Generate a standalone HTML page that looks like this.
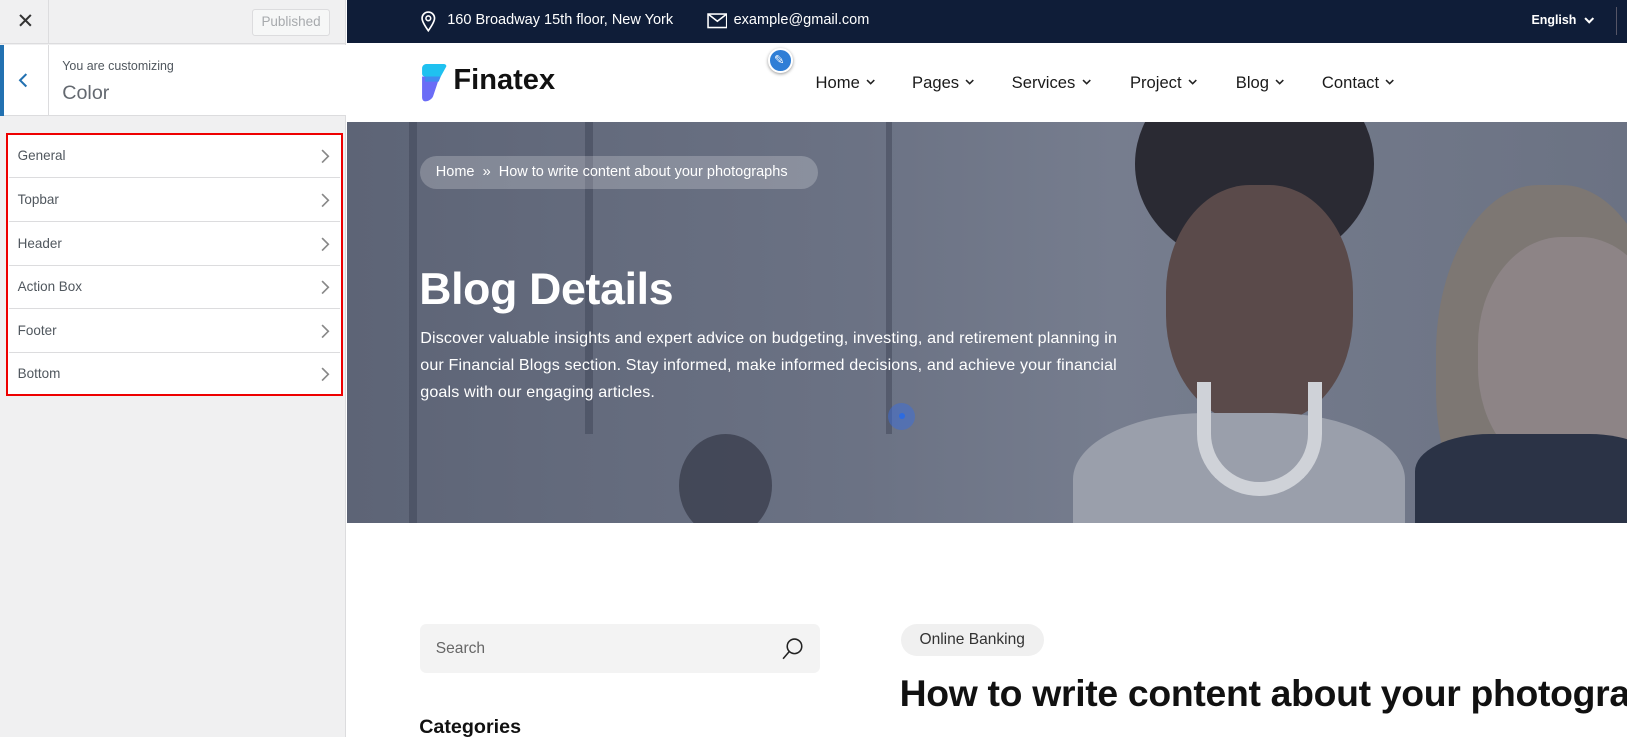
<!DOCTYPE html>
<html><head><meta charset="utf-8"><style>
html{zoom:1.0376}
*{box-sizing:border-box;margin:0;padding:0}
body{width:1568px;height:710px;overflow:hidden;font-family:"Liberation Sans",sans-serif;background:#fff;position:relative}
#wrap{position:absolute;left:0;top:0;width:1568px;height:710px;overflow:hidden}
.a{position:absolute}
#side{left:0;top:0;width:333px;height:710px;background:#f0f0f1;border-right:1px solid #dcdcde}
.item{position:absolute;left:9px;width:319px;height:42px;background:#fff;border-bottom:1px solid #dcdcde;font-size:13px;color:#50575e;padding:13px 0 0 8px}
.item svg{position:absolute;right:10px;top:13px}
.nav{font-size:16px;color:#1a1a1a;top:70px}
.nav svg{margin-left:6px;vertical-align:2px}
</style></head><body><div id="wrap">
<div id="side" class="a">
 <div class="a" style="left:0;top:0;width:333px;height:42px;border-bottom:1px solid #dcdcde"></div>
 <div class="a" style="left:46px;top:0;width:1px;height:42px;background:#dcdcde"></div>
 <div class="a" style="left:16px;top:9px;font-size:20px;color:#333">✕</div>
 <div class="a" style="left:243px;top:9px;width:75px;height:26px;border:1px solid #dcdcde;border-radius:3px;font-size:13px;color:#a7aaad;text-align:center;line-height:24px;background:#f6f7f7">Published</div>
 <div class="a" style="left:0;top:43px;width:333px;height:69px;background:#fff;border-bottom:1px solid #dcdcde"></div>
 <div class="a" style="left:0;top:43px;width:4px;height:69px;background:#2271b1"></div>
 <div class="a" style="left:46px;top:43px;width:1px;height:69px;background:#dcdcde"></div>
 <svg class="a" style="left:16px;top:69px" width="12" height="16"><path d="M9 2L3 8l6 6" stroke="#2271b1" stroke-width="2" fill="none"/></svg>
 <div class="a" style="left:60px;top:57px;font-size:12px;color:#50575e">You are customizing</div>
 <div class="a" style="left:60px;top:79px;font-size:19px;color:#646970;font-weight:300">Color</div>
 <div class="a" style="left:6px;top:128px;width:325px;height:254px;border:2px solid #e00;background:#fff"></div>
 <div class="item" style="top:130px">General<svg width="10" height="16"><path d="M2 2l6 6-6 6" stroke="#888" stroke-width="1.6" fill="none"/></svg></div>
 <div class="item" style="top:172px">Topbar<svg width="10" height="16"><path d="M2 2l6 6-6 6" stroke="#888" stroke-width="1.6" fill="none"/></svg></div>
 <div class="item" style="top:214px">Header<svg width="10" height="16"><path d="M2 2l6 6-6 6" stroke="#888" stroke-width="1.6" fill="none"/></svg></div>
 <div class="item" style="top:256px">Action Box<svg width="10" height="16"><path d="M2 2l6 6-6 6" stroke="#888" stroke-width="1.6" fill="none"/></svg></div>
 <div class="item" style="top:298px">Footer<svg width="10" height="16"><path d="M2 2l6 6-6 6" stroke="#888" stroke-width="1.6" fill="none"/></svg></div>
 <div class="item" style="top:340px;border:none;height:38px">Bottom<svg width="10" height="16"><path d="M2 2l6 6-6 6" stroke="#888" stroke-width="1.6" fill="none"/></svg></div>
</div>

<div class="a" style="left:334px;top:0;width:1234px;height:41px;background:#0f1d38"></div>
<svg class="a" style="left:405px;top:10px" width="16" height="22"><path d="M8 20C3 13 2 10 2 8a6 6 0 0 1 12 0c0 2-1 5-6 12z" stroke="#fff" stroke-width="1.6" fill="none"/><circle cx="8" cy="8" r="2.3" stroke="#fff" stroke-width="1.5" fill="none"/></svg>
<div class="a" style="left:431px;top:12px;color:#fff;font-size:14px">160 Broadway 15th floor, New York</div>
<svg class="a" style="left:681px;top:13px" width="20" height="15"><rect x="1" y="1" width="18" height="13" stroke="#fff" stroke-width="1.5" fill="none"/><path d="M1 1l9 7 9-7" stroke="#fff" stroke-width="1.5" fill="none"/></svg>
<div class="a" style="left:707px;top:12px;color:#fff;font-size:14px">example@gmail.com</div>
<div class="a" style="left:1476px;top:13px;color:#fff;font-size:12px;font-weight:bold">English</div>
<svg class="a" style="left:1526px;top:15px" width="12" height="9"><path d="M2 2l4 4 4-4" stroke="#fff" stroke-width="2" fill="none"/></svg>
<div class="a" style="left:1557px;top:7px;width:1px;height:27px;background:#556"></div>

<svg class="a" style="left:405px;top:61px" width="26" height="38"><path d="M6 1h17c2 0 3 2 2 3l-5 9H5c-2 0-3-1-3-3V5c0-2 2-4 4-4z" fill="#1fc1f0"/><path d="M2 13h17l-6 18c-1 4-5 6-8 6-2 0-3-2-3-4z" fill="#6b6cf6"/><path d="M5 13h15l-2 5H5z" fill="#3f8bf0"/></svg>
<div class="a" style="left:437px;top:62px;font-size:28px;font-weight:bold;color:#111">Finatex</div>
<div class="a" style="left:740px;top:46px;width:24px;height:24px;border-radius:50%;background:#2f7ed6;border:2px solid #fff;box-shadow:0 1px 3px #999"></div>
<div class="a" style="left:746px;top:50px;color:#fff;font-size:12px">✎</div>
<div class="a nav" style="left:786px">Home<svg width="9" height="6"><path d="M1 1l3.5 3.5L8 1" stroke="#222" stroke-width="1.5" fill="none"/></svg></div>
<div class="a nav" style="left:879px">Pages<svg width="9" height="6"><path d="M1 1l3.5 3.5L8 1" stroke="#222" stroke-width="1.5" fill="none"/></svg></div>
<div class="a nav" style="left:975px">Services<svg width="9" height="6"><path d="M1 1l3.5 3.5L8 1" stroke="#222" stroke-width="1.5" fill="none"/></svg></div>
<div class="a nav" style="left:1089px">Project<svg width="9" height="6"><path d="M1 1l3.5 3.5L8 1" stroke="#222" stroke-width="1.5" fill="none"/></svg></div>
<div class="a nav" style="left:1191px">Blog<svg width="9" height="6"><path d="M1 1l3.5 3.5L8 1" stroke="#222" stroke-width="1.5" fill="none"/></svg></div>
<div class="a nav" style="left:1274px">Contact<svg width="9" height="6"><path d="M1 1l3.5 3.5L8 1" stroke="#222" stroke-width="1.5" fill="none"/></svg></div>

<div class="a" style="left:334px;top:118px;width:1234px;height:386px;overflow:hidden;background:linear-gradient(90deg,#5d6476 0%,#6b7284 40%,#767d8e 60%,#6b7283 100%)">
 <div class="a" style="left:60px;top:0;width:8px;height:386px;background:#3d4455;opacity:.5"></div>
 <div class="a" style="left:230px;top:0;width:8px;height:300px;background:#3d4455;opacity:.5"></div>
 <div class="a" style="left:520px;top:0;width:6px;height:300px;background:#3d4455;opacity:.5"></div>
 <div class="a" style="left:760px;top:-60px;width:230px;height:200px;border-radius:50%;background:#2a2a33"></div>
 <div class="a" style="left:790px;top:60px;width:180px;height:230px;border-radius:45%;background:#5a4a4a"></div>
 <div class="a" style="left:700px;top:280px;width:320px;height:160px;border-radius:40% 40% 0 0;background:#9a9fab"></div>
 <div class="a" style="left:820px;top:250px;width:120px;height:110px;border:14px solid #cfd2d8;border-top:none;border-radius:0 0 60px 60px"></div>
 <div class="a" style="left:1050px;top:60px;width:220px;height:360px;border-radius:45%;background:#7d7773"></div>
 <div class="a" style="left:1090px;top:110px;width:180px;height:230px;border-radius:45%;background:#8d8486"></div>
 <div class="a" style="left:1030px;top:300px;width:240px;height:120px;border-radius:30% 30% 0 0;background:#2b3346"></div>
 <div class="a" style="left:320px;top:300px;width:90px;height:100px;border-radius:50%;background:#3b3f4d;opacity:.8"></div>
</div>
<div class="a" style="left:405px;top:150px;width:383px;height:32px;border-radius:16px;background:rgba(255,255,255,.22)"></div>
<div class="a" style="left:420px;top:158px;color:#fff;font-size:14px">Home &nbsp;»&nbsp; How to write content about your photographs</div>
<div class="a" style="left:404px;top:255px;color:#fff;font-size:43px;font-weight:bold;letter-spacing:-.3px">Blog Details</div>
<div class="a" style="left:405px;top:313px;width:695px;color:#fff;font-size:15.5px;letter-spacing:.15px;line-height:26px">Discover valuable insights and expert advice on budgeting, investing, and retirement planning in our Financial Blogs section. Stay informed, make informed decisions, and achieve your financial goals with our engaging articles.</div>
<div class="a" style="left:856px;top:388px;width:26px;height:26px;border-radius:50%;background:rgba(60,110,220,.5)"></div>
<div class="a" style="left:866px;top:398px;width:6px;height:6px;border-radius:50%;background:#2d6be0"></div>

<div class="a" style="left:405px;top:601px;width:385px;height:48px;border-radius:6px;background:#f3f3f3"></div>
<div class="a" style="left:420px;top:617px;font-size:15px;color:#666">Search</div>
<svg class="a" style="left:753px;top:614px" width="22" height="24"><circle cx="13" cy="9" r="7" stroke="#222" stroke-width="1.5" fill="none"/><path d="M8 14l-6 7" stroke="#222" stroke-width="1.5"/></svg>
<div class="a" style="left:404px;top:690px;font-size:19px;font-weight:bold;color:#111">Categories</div>
<div class="a" style="left:868px;top:601px;width:138px;height:31px;border-radius:16px;background:#f0f0f0;font-size:15px;color:#333;text-align:center;line-height:31px">Online Banking</div>
<div class="a" style="left:867px;top:648px;width:701px;overflow:hidden;font-size:36px;font-weight:bold;color:#111;white-space:nowrap;letter-spacing:-.3px">How to write content about your photographs</div>
</div></body></html>
